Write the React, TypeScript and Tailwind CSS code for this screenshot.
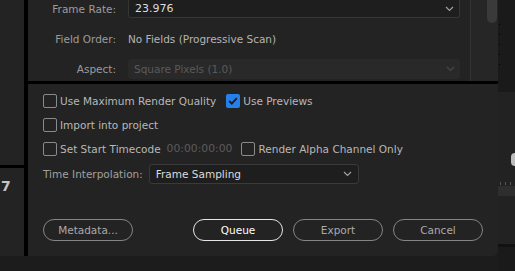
import React from 'react';

const font = { fontFamily: '"DejaVu Sans", "Liberation Sans", sans-serif' };

const Chevron: React.FC<{ className?: string }> = ({ className }) => (
  <svg width="9" height="6" viewBox="0 0 9 6" className={className} fill="none">
    <path d="M1 1l3.5 3.5L8 1" stroke="currentColor" strokeWidth="1.2" />
  </svg>
);

const Checkbox: React.FC<{ checked?: boolean }> = ({ checked }) =>
  checked ? (
    <span className="w-[14px] h-[14px] rounded-[2px] bg-[#2680eb] flex items-center justify-center shrink-0">
      <svg width="10" height="8" viewBox="0 0 10 8" fill="none">
        <path d="M1.2 4l2.6 2.6L8.8 1.2" stroke="#1b1b1b" strokeWidth="1.8" />
      </svg>
    </span>
  ) : (
    <span className="w-[14px] h-[14px] rounded-[2px] border-[1.5px] border-[#8a8a8a] shrink-0" />
  );

const Check: React.FC<{ label: string; checked?: boolean }> = ({ label, checked }) => (
  <label className="flex items-center gap-[3px] h-[14px]">
    <Checkbox checked={checked} />
    <span className="text-[#b8b8b8] whitespace-nowrap">{label}</span>
  </label>
);

const PillButton: React.FC<{ label: string; primary?: boolean }> = ({ label, primary }) => (
  <button
    className={`w-[90px] h-[22px] rounded-full flex items-center justify-center ${
      primary ? 'border-[1.5px] border-[#e6e6e6] text-white' : 'border-[1.5px] border-[#858585] text-[#aaaaaa]'
    }`}
  >
    {label}
  </button>
);

export default function App() {
  return (
    <div className="w-[515px] h-[271px] flex bg-[#1c1c1c] overflow-hidden text-[10.5px] leading-none" style={font}>
      <div className="w-[498px] flex flex-col">
        <div className="h-[256px] flex">
          {/* left strip */}
          <div className="w-[28px] flex flex-col border-r-4 border-black">
            <div className="h-[168px] bg-[#232323] border-b-[3px] border-black" />
            <div className="flex-1 bg-[#232323] pt-[11px] pl-[1px] text-[14px] font-bold text-[#c4c4c4]">7</div>
          </div>

          <div className="flex-1 flex flex-col">
            {/* top settings panel */}
            <div className="h-[84px] bg-[#232323] border-b-[3px] border-black flex">
              <div className="w-[442px] flex flex-col">
                <div className="flex items-center h-[18px]">
                  <span className="w-[88px] text-right text-[#9c9c9c]">Frame Rate:</span>
                  <div className="ml-[12px] w-[332px] h-[18px] bg-[#1e1e1e] border-x border-b border-[#353535] rounded-b-[3px] flex items-center justify-between pl-[6px] pr-[5px]">
                    <span className="text-[#dcdcdc] text-[11px]">23.976</span>
                    <Chevron className="text-[#a0a0a0]" />
                  </div>
                </div>
                <div className="flex items-center h-[22px] mt-[10px]">
                  <span className="w-[88px] text-right text-[#9c9c9c]">Field Order:</span>
                  <span className="ml-[12px] text-[#b4b4b4]">No Fields (Progressive Scan)</span>
                </div>
                <div className="flex items-center mt-[9px]">
                  <span className="w-[88px] text-right text-[#9c9c9c]">Aspect:</span>
                  <div className="ml-[12px] w-[332px] h-[20px] bg-[#292929] rounded-[3px] flex items-center justify-between pl-[6px] pr-[5px]">
                    <span className="text-[#5a5a5a]">Square Pixels (1.0)</span>
                    <Chevron className="text-[#474747]" />
                  </div>
                </div>
              </div>
              <div className="w-[28px] border-l border-[#333] bg-[#262626] flex justify-end pr-[1px]">
                <div className="w-[10px] h-[23px] bg-[#3a3a3a] rounded-b-full" />
              </div>
            </div>

            {/* export dialog */}
            <div className="flex-1 bg-[#232323] rounded-br-[5px] flex flex-col px-[15px] pt-[10px]">
              <div className="flex items-center gap-[10px]">
                <Check label="Use Maximum Render Quality" />
                <Check label="Use Previews" checked />
              </div>
              <div className="mt-[10px]">
                <Check label="Import into project" />
              </div>
              <div className="flex items-center mt-[10px]">
                <Check label="Set Start Timecode" />
                <span className="ml-[6px] text-[#5c5c5c] text-[10.8px]">00:00:00:00</span>
                <span className="ml-[9px]">
                  <Check label="Render Alpha Channel Only" />
                </span>
              </div>
              <div className="flex items-center mt-[8px]">
                <span className="text-[#a0a0a0] whitespace-nowrap">Time Interpolation:</span>
                <div className="ml-[6px] w-[210px] h-[20px] bg-[#1e1e1e] border border-[#3a3a3a] rounded-[3px] flex items-center justify-between pl-[6px] pr-[6px]">
                  <span className="text-[#dcdcdc]">Frame Sampling</span>
                  <Chevron className="text-[#a0a0a0]" />
                </div>
              </div>
              <div className="flex items-center mt-[35px]">
                <PillButton label="Metadata..." />
                <div className="flex-1" />
                <div className="flex gap-[10px]">
                  <PillButton label="Queue" primary />
                  <PillButton label="Export" />
                  <PillButton label="Cancel" />
                </div>
              </div>
            </div>
          </div>
        </div>
        <div className="flex-1 bg-[#1c1c1c]" />
      </div>

      {/* right edge of neighbouring panel */}
      <div className="flex-1 flex flex-col">
        <div className="h-[92px] bg-[#1a1a1a] flex flex-col gap-[9px] pt-[24px] pl-[1px]">
          <span className="w-[1px] h-[1px] bg-black" />
          <span className="w-[1px] h-[1px] bg-black" />
          <span className="w-[1px] h-[1px] bg-black" />
          <span className="w-[1px] h-[1px] bg-black" />
          <span className="w-[1px] h-[1px] bg-black" />
        </div>
        <div className="h-[152px] bg-[#222] flex flex-col">
          <div className="h-[74px] flex justify-end items-end">
            <div className="w-[4px] h-[13px] bg-[#bdbdbd] rounded-l-full" />
          </div>
          <div className="h-[20px] flex items-end gap-[4px] pl-[2px] pb-[1px]">
            <span className="w-[1px] h-[3px] bg-[#555]" />
            <span className="w-[1px] h-[3px] bg-[#555]" />
            <span className="w-[1px] h-[3px] bg-[#555]" />
          </div>
          <div className="h-[10px] bg-[#2e2e2e]" />
        </div>
        <div className="h-[3px] bg-[#111]" />
        <div className="flex-1 bg-[#1a1a1a]" />
      </div>
    </div>
  );
}
